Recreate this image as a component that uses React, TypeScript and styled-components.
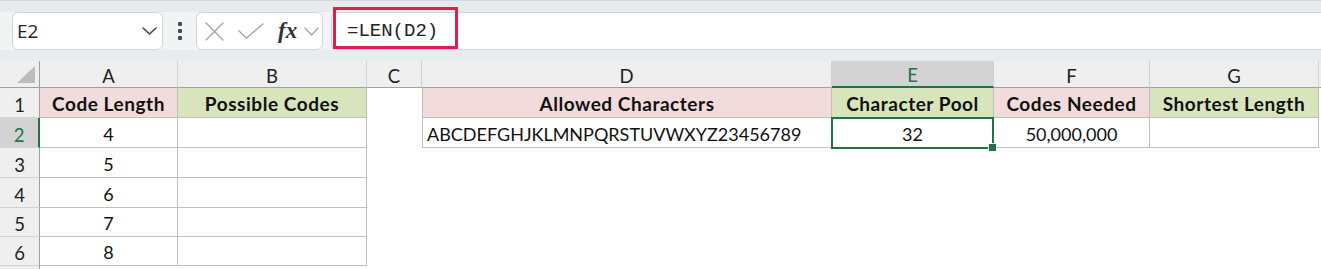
import React from 'react';
import styled, { createGlobalStyle, css } from 'styled-components';

const GlobalStyle = createGlobalStyle`
  html, body { margin: 0; padding: 0; background: #ffffff; }
  body { font-family: Lato, "Liberation Sans", sans-serif; }
`;

const GREEN = '#217346';

const Frame = styled.div`
  position: relative;
  width: 1321px;
  height: 269px;
  overflow: hidden;
  background: #ffffff;
`;

const TopStrip = styled.div`
  height: 12px;
  background: linear-gradient(#d6d9dc 0, #d6d9dc 1px, #e8ebee 1px, #e8ebee 100%);
`;

const FormulaBar = styled.div`
  height: 38px;
  display: flex;
  align-items: stretch;
  background: #f1f3f5;
`;

const NameBox = styled.div`
  margin-left: 12px;
  width: 151px;
  box-sizing: border-box;
  border: 1px solid #d3d5d8;
  border-radius: 6px;
  background: #ffffff;
  display: flex;
  align-items: center;
  justify-content: space-between;
  padding: 0 5px 0 4px;
  font-family: "Open Sans", "Noto Sans", sans-serif;
  font-size: 19px;
  color: #222222;
`;

const DotsWrap = styled.div`
  width: 33px;
  display: flex;
  flex-direction: column;
  align-items: center;
  justify-content: center;
  gap: 3px;
`;

const Dot = styled.span`
  width: 4px;
  height: 4px;
  border-radius: 1px;
  background: #4a4a4a;
`;

const FxBox = styled.div`
  width: 127px;
  box-sizing: border-box;
  border: 1px solid #d3d5d8;
  border-radius: 6px;
  background: #ffffff;
  display: flex;
  align-items: center;
  padding-left: 8px;
`;

const IconSlot = styled.span<{ $w: number; $ml?: number }>`
  display: inline-flex;
  width: ${(p) => p.$w}px;
  margin-left: ${(p) => p.$ml ?? 0}px;
  justify-content: center;
  align-items: center;
`;

const FxText = styled.span`
  font-family: "Liberation Serif", "DejaVu Serif", serif;
  font-style: italic;
  font-weight: 700;
  font-size: 23px;
  color: #333333;
  margin-left: 14px;
  line-height: 1;
  padding-bottom: 2px;
`;

const FormulaInput = styled.div`
  flex: 1;
  margin-left: 8px;
  box-sizing: border-box;
  border: 1px solid #d3d5d8;
  border-right: none;
  border-radius: 6px 0 0 6px;
  background: #ffffff;
  display: flex;
  align-items: center;
  padding-left: 15px;
  font-family: "Liberation Mono", "DejaVu Sans Mono", monospace;
  font-size: 19px;
  color: #222222;
`;

const GapStrip = styled.div`
  height: 11px;
  background: #e9ecef;
`;

const Sheet = styled.div`
  display: grid;
  grid-template-columns: 40px 138px 189px 55px 410px 162px 156px 169px 1fr;
  grid-template-rows: 27px 30px 30px 30px 30px 29px 29px 30px;
  font-family: Lato, "Liberation Sans", sans-serif;
  font-size: 18px;
  color: #111111;
`;

const Corner = styled.div`
  position: relative;
  background: #efefef;
  box-sizing: border-box;
  border-right: 1px solid #9f9f9f;
  border-bottom: 1px solid #9f9f9f;
`;

const CornerTri = styled.span`
  position: absolute;
  right: 4px;
  bottom: 4px;
  width: 0;
  height: 0;
  border-style: solid;
  border-width: 0 0 17px 18px;
  border-color: transparent transparent #bcbcbc transparent;
`;

const ColHead = styled.div<{ $sel?: boolean }>`
  box-sizing: border-box;
  background: ${(p) => (p.$sel ? '#d3d3d3' : '#efefef')};
  color: ${(p) => (p.$sel ? GREEN : '#222222')};
  border-right: 1px solid #d2d2d2;
  border-bottom: ${(p) => (p.$sel ? `2px solid ${GREEN}` : '1px solid #9f9f9f')};
  display: flex;
  align-items: flex-end;
  justify-content: center;
  line-height: 1.2;
  font-size: 18.5px;
`;

const RowHead = styled.div<{ $sel?: boolean }>`
  box-sizing: border-box;
  background: ${(p) => (p.$sel ? '#d3d3d3' : '#efefef')};
  color: ${(p) => (p.$sel ? GREEN : '#222222')};
  border-bottom: 1px solid #d2d2d2;
  border-right: ${(p) => (p.$sel ? `2px solid ${GREEN}` : '1px solid #9f9f9f')};
  display: flex;
  align-items: flex-end;
  justify-content: center;
  line-height: 1.2;
  padding-bottom: 1px;
  font-size: 18.5px;
`;

type Fill = 'pink' | 'green' | 'white';

const fills: Record<Fill, string> = {
  pink: '#f2dcdb',
  green: '#d8e4bc',
  white: '#ffffff',
};

const Cell = styled.div<{
  $fill?: Fill;
  $bold?: boolean;
  $align?: 'left' | 'center';
  $boxed?: boolean;
  $leftEdge?: boolean;
  $raised?: boolean;
}>`
  position: relative;
  z-index: ${(p) => (p.$raised ? 2 : 'auto')};
  box-sizing: border-box;
  background: ${(p) => fills[p.$fill ?? 'white']};
  font-weight: ${(p) => (p.$bold ? 700 : 400)};
  font-size: ${(p) => (p.$bold ? '19px' : '18px')};
  letter-spacing: ${(p) => (p.$bold ? '0.55px' : '0')};
  display: flex;
  align-items: flex-end;
  justify-content: ${(p) => (p.$align === 'left' ? 'flex-start' : 'center')};
  padding: 0 4px 1px;
  line-height: 1.2;
  white-space: nowrap;
  ${(p) =>
    p.$boxed &&
    css`
      border-right: 1px solid #bfbfbf;
      border-bottom: 1px solid #bfbfbf;
    `}
  ${(p) =>
    p.$leftEdge &&
    css`
      border-left: 1px solid #bfbfbf;
    `}
`;

const Selection = styled.span`
  position: absolute;
  left: -1px;
  top: -1px;
  right: -1px;
  bottom: -2px;
  border: 2px solid ${GREEN};
  pointer-events: none;
`;

const Handle = styled.span`
  position: absolute;
  right: -5px;
  bottom: -5px;
  width: 7px;
  height: 7px;
  background: ${GREEN};
  border: 1px solid #ffffff;
`;

const Highlight = styled.div`
  position: absolute;
  left: 333px;
  top: 7px;
  width: 125px;
  height: 42px;
  box-sizing: border-box;
  border: 3px solid #e01e4b;
  pointer-events: none;
`;

const Chevron: React.FC<{ color: string; w: number; h: number; sw: number }> = ({ color, w, h, sw }) => (
  <svg width={w} height={h} viewBox={`0 0 ${w} ${h}`} fill="none">
    <path d={`M1 1 L${w / 2} ${h - 1} L${w - 1} 1`} stroke={color} strokeWidth={sw} strokeLinecap="round" strokeLinejoin="round" />
  </svg>
);

const CrossIcon = () => (
  <svg width="19" height="19" viewBox="0 0 19 19" fill="none">
    <path d="M1 1 L18 18 M18 1 L1 18" stroke="#a3a3a3" strokeWidth="1.3" strokeLinecap="round" />
  </svg>
);

const CheckIcon = () => (
  <svg width="26" height="16" viewBox="0 0 26 16" fill="none">
    <path d="M1 8 L8.5 15 L25 1" stroke="#a3a3a3" strokeWidth="1.3" strokeLinecap="round" strokeLinejoin="round" />
  </svg>
);

const columns = ['A', 'B', 'C', 'D', 'E', 'F', 'G', ''];

type CellSpec = {
  text?: string;
  fill?: Fill;
  bold?: boolean;
  align?: 'left' | 'center';
  boxed?: boolean;
  leftEdge?: boolean;
  selected?: boolean;
};

const rows: CellSpec[][] = [
  [
    { text: 'Code Length', fill: 'pink', bold: true, boxed: true },
    { text: 'Possible Codes', fill: 'green', bold: true, boxed: true },
    {},
    { text: 'Allowed Characters', fill: 'pink', bold: true, boxed: true, leftEdge: true },
    { text: 'Character Pool', fill: 'green', bold: true, boxed: true },
    { text: 'Codes Needed', fill: 'pink', bold: true, boxed: true },
    { text: 'Shortest Length', fill: 'green', bold: true, boxed: true },
    {},
  ],
  [
    { text: '4', boxed: true },
    { boxed: true },
    {},
    { text: 'ABCDEFGHJKLMNPQRSTUVWXYZ23456789', align: 'left', boxed: true, leftEdge: true },
    { text: '32', boxed: true, selected: true },
    { text: '50,000,000', boxed: true },
    { boxed: true },
    {},
  ],
  ...['5', '6', '7', '8'].map((n) => [
    { text: n, boxed: true },
    { boxed: true },
    {},
    {},
    {},
    {},
    {},
    {},
  ]),
  [{}, {}, {}, {}, {}, {}, {}, {}],
];

const visibleRowNumbers = 6;

export default function App() {
  return (
    <Frame>
      <GlobalStyle />
      <TopStrip />
      <FormulaBar>
        <NameBox>
          <span>E2</span>
          <Chevron color="#444444" w={15} h={8} sw={1.6} />
        </NameBox>
        <DotsWrap>
          <Dot />
          <Dot />
          <Dot />
        </DotsWrap>
        <FxBox>
          <IconSlot $w={19}>
            <CrossIcon />
          </IconSlot>
          <IconSlot $w={26} $ml={14}>
            <CheckIcon />
          </IconSlot>
          <FxText>fx</FxText>
          <IconSlot $w={15} $ml={7}>
            <Chevron color="#a3a3a3" w={15} h={9} sw={1.3} />
          </IconSlot>
        </FxBox>
        <FormulaInput>=LEN(D2)</FormulaInput>
      </FormulaBar>
      <GapStrip />
      <Sheet>
        <Corner>
          <CornerTri />
        </Corner>
        {columns.map((c, i) => (
          <ColHead key={`h${i}`} $sel={c === 'E'}>
            {c}
          </ColHead>
        ))}
        {rows.map((r, ri) => (
          <React.Fragment key={`r${ri}`}>
            <RowHead $sel={ri === 1}>{ri < visibleRowNumbers ? ri + 1 : ''}</RowHead>
            {r.map((c, ci) => (
              <Cell
                key={`c${ri}-${ci}`}
                $fill={c.fill}
                $bold={c.bold}
                $align={c.align}
                $boxed={c.boxed}
                $leftEdge={c.leftEdge}
                $raised={c.selected}
              >
                {c.text}
                {c.selected && (
                  <Selection>
                    <Handle />
                  </Selection>
                )}
              </Cell>
            ))}
          </React.Fragment>
        ))}
      </Sheet>
      <Highlight />
    </Frame>
  );
}
